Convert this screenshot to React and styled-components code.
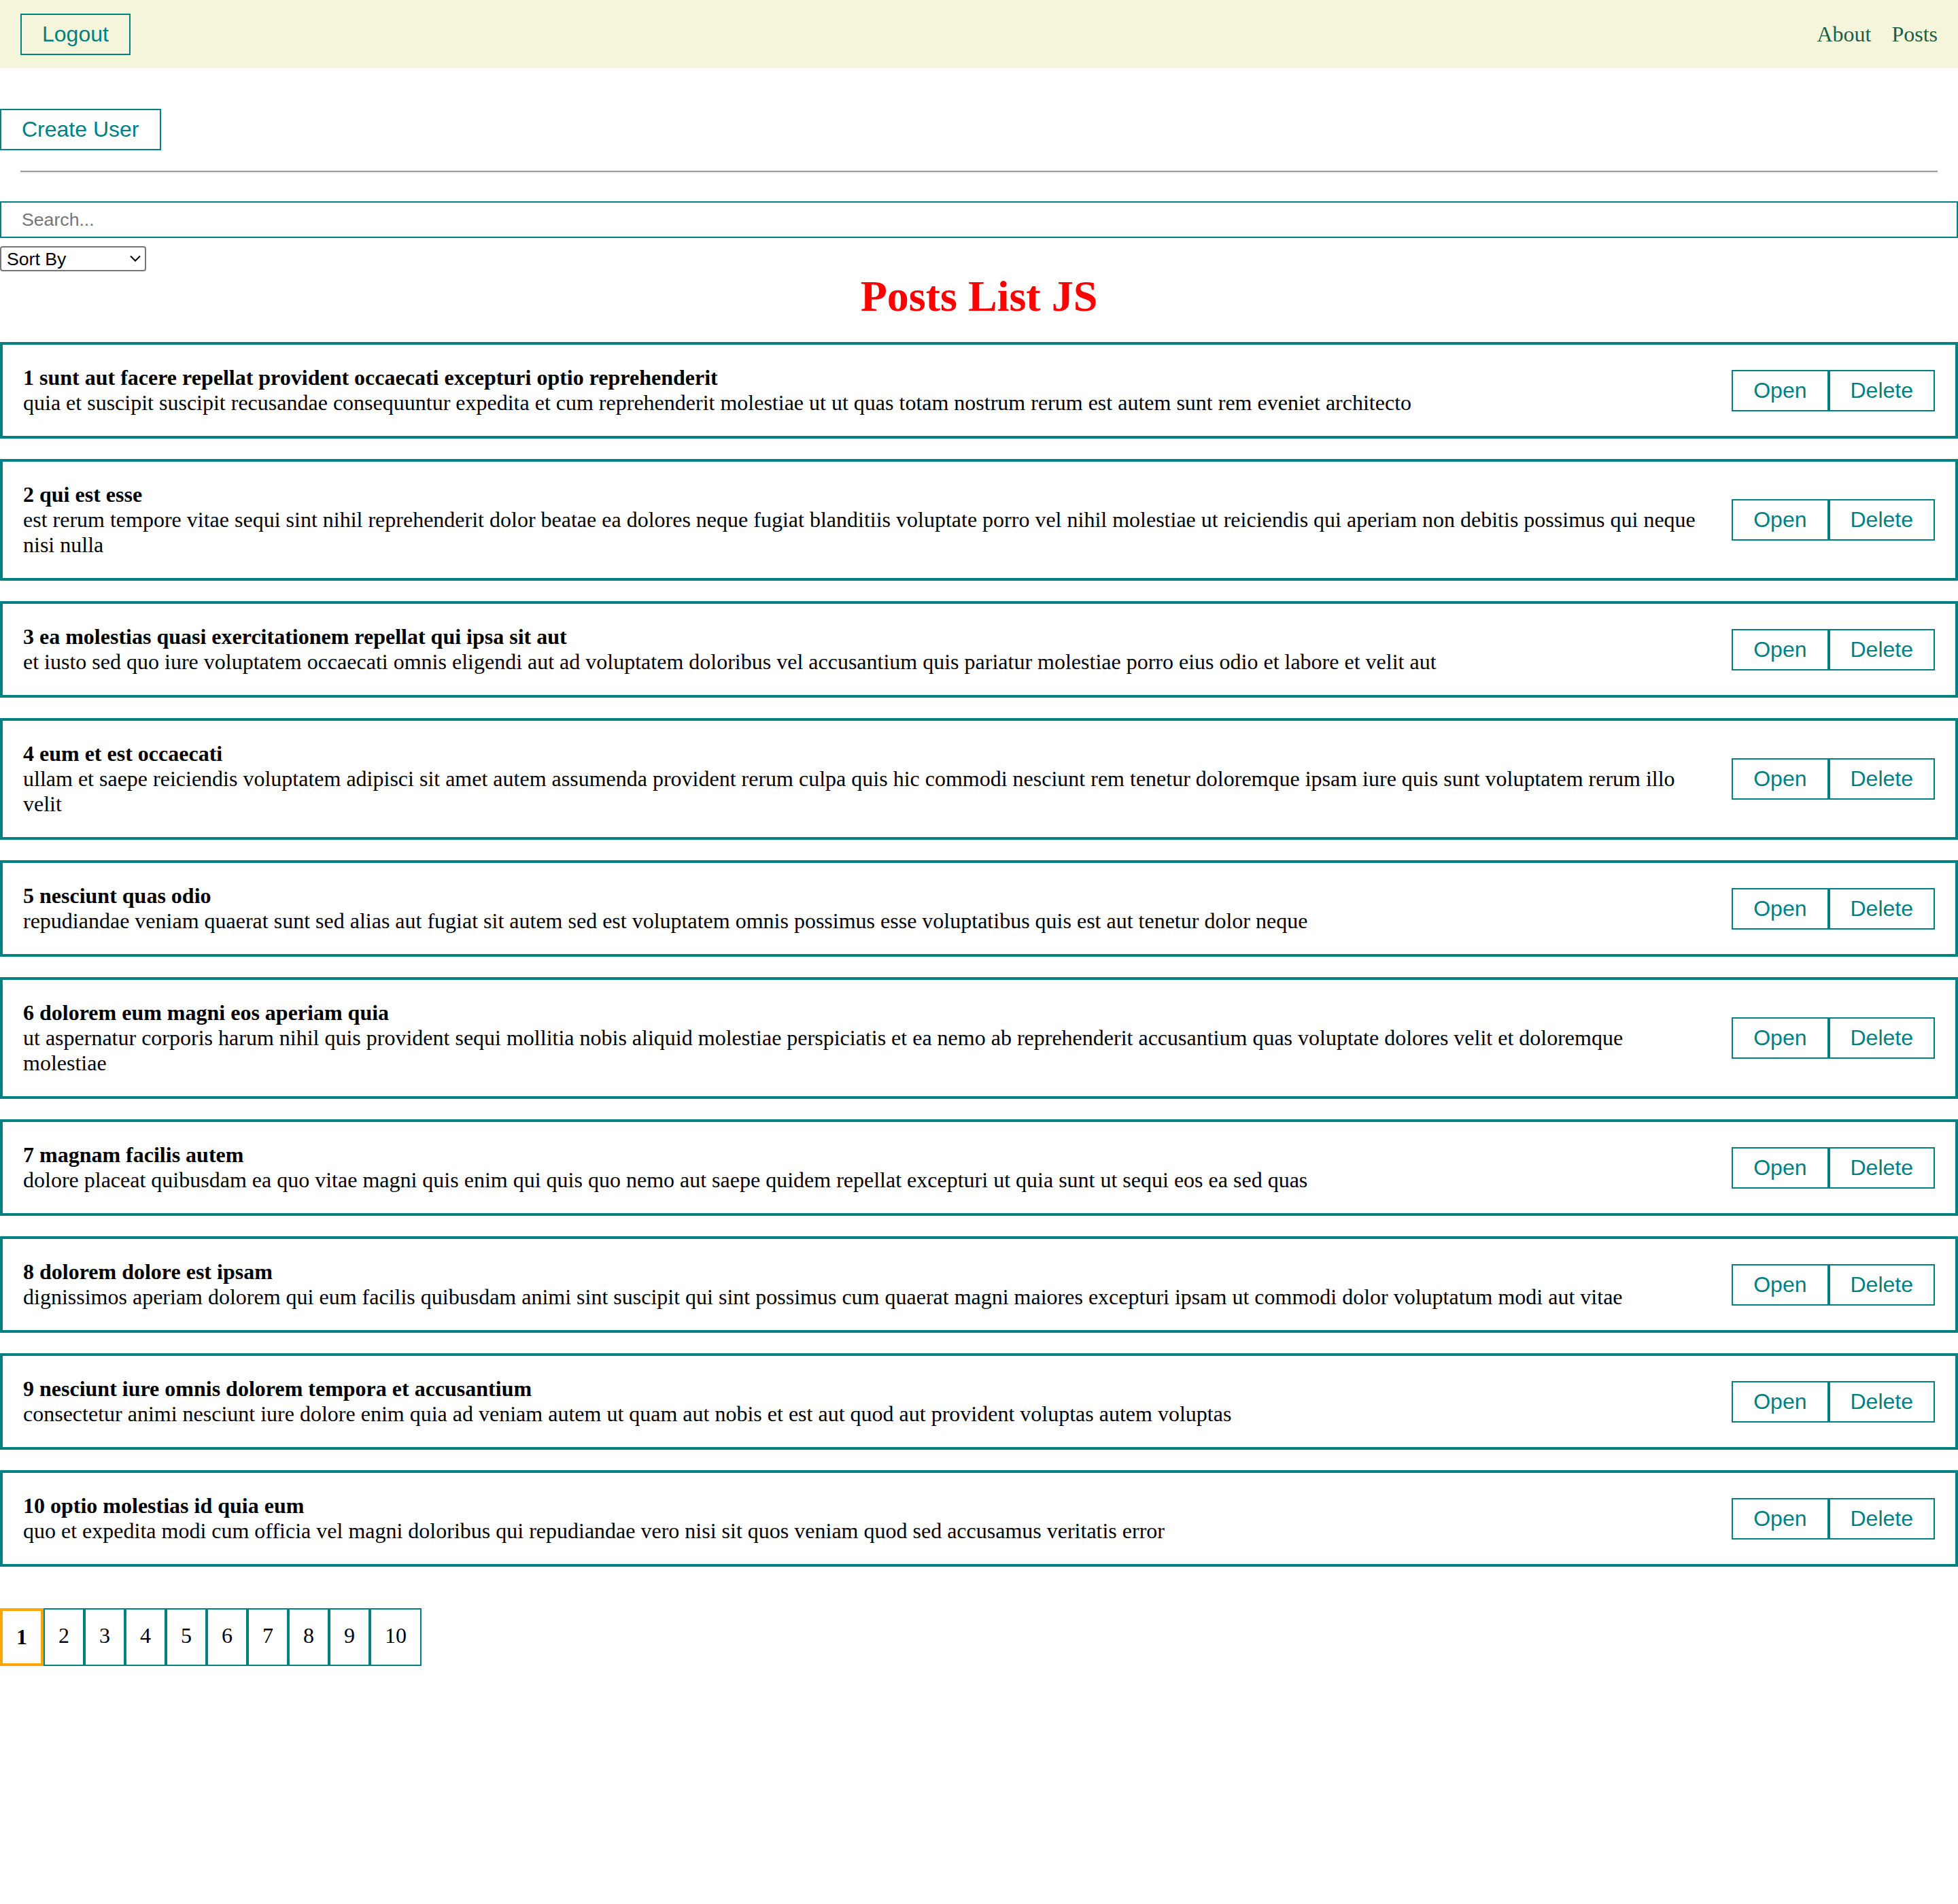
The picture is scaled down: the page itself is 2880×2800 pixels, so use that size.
import React from "react";
import styled, { createGlobalStyle } from "styled-components";

const GlobalStyle = createGlobalStyle`
  html, body {
    margin: 0;
    padding: 0;
    background: #ffffff;
  }
  body {
    font-family: "Liberation Serif", "Times New Roman", serif;
    font-size: 32px;
    color: #000000;
  }
  * { box-sizing: border-box; }
`;

const TEAL = "#008080";

const Navbar = styled.header`
  height: 100px;
  padding: 0 30px;
  display: flex;
  align-items: center;
  justify-content: space-between;
  background: #f5f5dc;
`;

const OutlineButton = styled.button`
  font-family: "Liberation Sans", Arial, sans-serif;
  font-size: 32px;
  line-height: normal;
  color: ${TEAL};
  background: transparent;
  border: 2px solid ${TEAL};
  padding: 10px 30px;
  margin: 0;
  cursor: pointer;
`;

const NavLinks = styled.nav`
  display: flex;
  gap: 30px;
`;

const NavLink = styled.a`
  font-family: "Liberation Serif", "Times New Roman", serif;
  font-size: 32px;
  line-height: normal;
  color: #1d5f42;
  text-decoration: none;
`;

const Content = styled.main`
  display: block;
`;

const Toolbar = styled.div`
  display: flex;
  padding-top: 60px;
`;

const Divider = styled.hr`
  height: 0;
  margin: 30px 30px 41px;
  border: none;
  border-top: 2px solid #9a9a9a;
  border-bottom: 2px solid #eeeeee;
`;

const SearchInput = styled.input`
  display: block;
  width: 100%;
  height: 54px;
  margin: 0;
  padding: 10px 30px;
  border: 2px solid ${TEAL};
  font-family: "Liberation Sans", Arial, sans-serif;
  font-size: 26.67px;
  line-height: 30px;
  outline: none;
  &::placeholder {
    color: #757575;
  }
`;

const SelectWrap = styled.div`
  position: relative;
  width: 215px;
  margin-top: 12px;
`;

const SortSelect = styled.select`
  display: block;
  width: 215px;
  height: 37px;
  margin: 0;
  padding: 0 0 0 8px;
  appearance: none;
  -webkit-appearance: none;
  background: #ffffff;
  border: 2px solid #767676;
  border-radius: 4px;
  font-family: "Liberation Sans", Arial, sans-serif;
  font-size: 26.67px;
  color: #000000;
`;

const Chevron = styled.svg`
  position: absolute;
  right: 8px;
  top: 13px;
  width: 16px;
  height: 10px;
  pointer-events: none;
`;

const Title = styled.h1`
  margin: 0;
  font-size: 64px;
  font-weight: bold;
  line-height: normal;
  color: #ff0000;
  text-align: center;
`;

const PostCard = styled.article`
  margin-top: 30px;
  border: 4px solid ${TEAL};
  padding: 30px;
  display: flex;
  align-items: center;
  justify-content: space-between;
  gap: 30px;
`;

const PostText = styled.div`
  flex: 1;
  min-width: 0;
`;

const PostTitle = styled.div`
  font-weight: bold;
  line-height: normal;
`;

const PostBody = styled.div`
  line-height: normal;
`;

const Actions = styled.div`
  display: flex;
  flex-shrink: 0;
`;

const Pagination = styled.div`
  display: flex;
  margin-top: 61px;
`;

const PageItem = styled.span`
  padding: 20px;
  border: ${(p) => (p.$active ? "4px solid #ffa500" : `2px solid ${TEAL}`)};
  font-weight: ${(p) => (p.$active ? "bold" : "normal")};
  font-size: 32px;
  line-height: normal;
  cursor: pointer;
`;

const posts = [
  {
    id: 1,
    title: "sunt aut facere repellat provident occaecati excepturi optio reprehenderit",
    body: "quia et suscipit suscipit recusandae consequuntur expedita et cum reprehenderit molestiae ut ut quas totam nostrum rerum est autem sunt rem eveniet architecto",
  },
  {
    id: 2,
    title: "qui est esse",
    body: "est rerum tempore vitae sequi sint nihil reprehenderit dolor beatae ea dolores neque fugiat blanditiis voluptate porro vel nihil molestiae ut reiciendis qui aperiam non debitis possimus qui neque nisi nulla",
  },
  {
    id: 3,
    title: "ea molestias quasi exercitationem repellat qui ipsa sit aut",
    body: "et iusto sed quo iure voluptatem occaecati omnis eligendi aut ad voluptatem doloribus vel accusantium quis pariatur molestiae porro eius odio et labore et velit aut",
  },
  {
    id: 4,
    title: "eum et est occaecati",
    body: "ullam et saepe reiciendis voluptatem adipisci sit amet autem assumenda provident rerum culpa quis hic commodi nesciunt rem tenetur doloremque ipsam iure quis sunt voluptatem rerum illo velit",
  },
  {
    id: 5,
    title: "nesciunt quas odio",
    body: "repudiandae veniam quaerat sunt sed alias aut fugiat sit autem sed est voluptatem omnis possimus esse voluptatibus quis est aut tenetur dolor neque",
  },
  {
    id: 6,
    title: "dolorem eum magni eos aperiam quia",
    body: "ut aspernatur corporis harum nihil quis provident sequi mollitia nobis aliquid molestiae perspiciatis et ea nemo ab reprehenderit accusantium quas voluptate dolores velit et doloremque molestiae",
  },
  {
    id: 7,
    title: "magnam facilis autem",
    body: "dolore placeat quibusdam ea quo vitae magni quis enim qui quis quo nemo aut saepe quidem repellat excepturi ut quia sunt ut sequi eos ea sed quas",
  },
  {
    id: 8,
    title: "dolorem dolore est ipsam",
    body: "dignissimos aperiam dolorem qui eum facilis quibusdam animi sint suscipit qui sint possimus cum quaerat magni maiores excepturi ipsam ut commodi dolor voluptatum modi aut vitae",
  },
  {
    id: 9,
    title: "nesciunt iure omnis dolorem tempora et accusantium",
    body: "consectetur animi nesciunt iure dolore enim quia ad veniam autem ut quam aut nobis et est aut quod aut provident voluptas autem voluptas",
  },
  {
    id: 10,
    title: "optio molestias id quia eum",
    body: "quo et expedita modi cum officia vel magni doloribus qui repudiandae vero nisi sit quos veniam quod sed accusamus veritatis error",
  },
];

const pages = [1, 2, 3, 4, 5, 6, 7, 8, 9, 10];

export default function App() {
  return (
    <>
      <GlobalStyle />
      <Navbar>
        <OutlineButton>Logout</OutlineButton>
        <NavLinks>
          <NavLink href="#about">About</NavLink>
          <NavLink href="#posts">Posts</NavLink>
        </NavLinks>
      </Navbar>
      <Content>
        <Toolbar>
          <OutlineButton>Create User</OutlineButton>
        </Toolbar>
        <Divider />
        <SearchInput placeholder="Search..." />
        <SelectWrap>
          <SortSelect defaultValue="">
            <option value="" disabled>
              Sort By
            </option>
            <option value="title">By title</option>
            <option value="body">By description</option>
          </SortSelect>
          <Chevron viewBox="0 0 16 10" fill="none">
            <path d="M1 1.5 L8 8.5 L15 1.5" stroke="#000" strokeWidth="2" />
          </Chevron>
        </SelectWrap>
        <Title>Posts List JS</Title>
        {posts.map((post) => (
          <PostCard key={post.id}>
            <PostText>
              <PostTitle>
                {post.id} {post.title}
              </PostTitle>
              <PostBody>{post.body}</PostBody>
            </PostText>
            <Actions>
              <OutlineButton>Open</OutlineButton>
              <OutlineButton>Delete</OutlineButton>
            </Actions>
          </PostCard>
        ))}
        <Pagination>
          {pages.map((n) => (
            <PageItem key={n} $active={n === 1}>
              {n}
            </PageItem>
          ))}
        </Pagination>
      </Content>
    </>
  );
}
